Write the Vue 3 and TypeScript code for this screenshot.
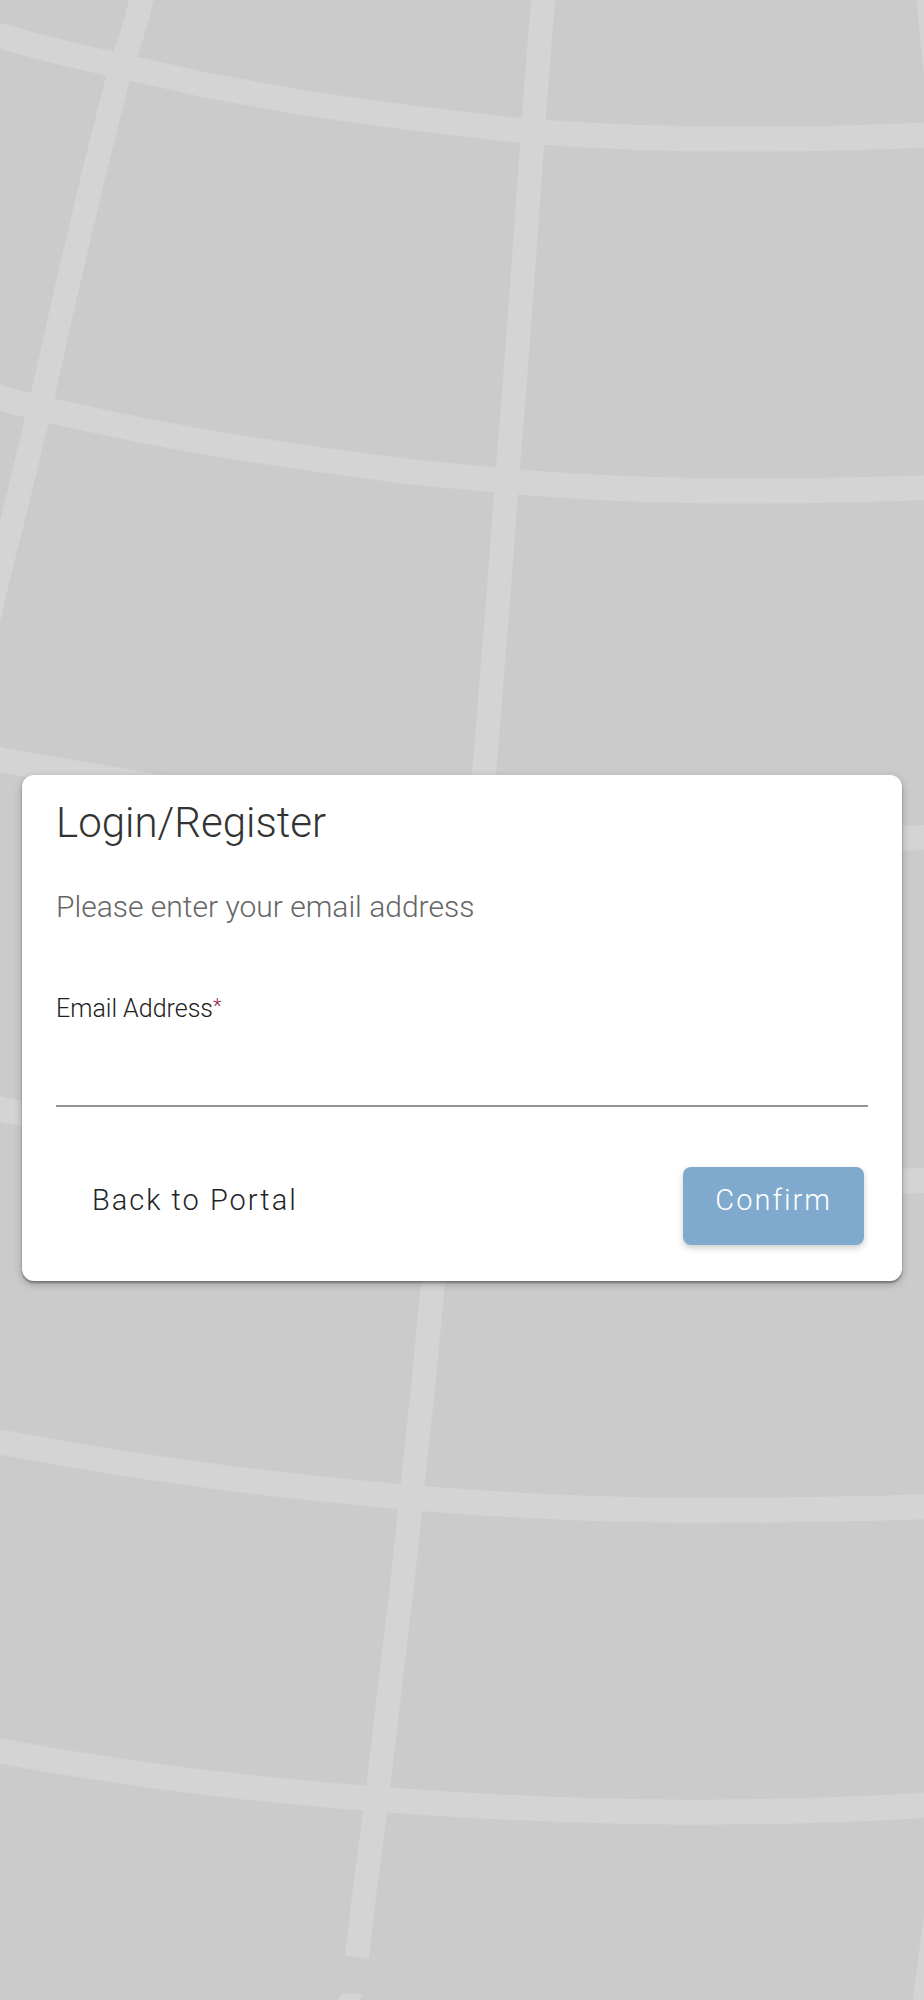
<script setup lang="ts">
import { ref } from 'vue'

const email = ref('')

const parallels: string[] = [
  'M-20 30 L0 36 Q60 53 121 66 L206 85 Q258 95 312 104 Q412 119 524 131 Q640 140 766 139 Q850 139 944 134',
  'M-20 393 L0 398 L35 407 Q147 433 236 447 Q324 461 412 472 L507 481 Q620 491 750 491 Q850 491 944 487',
  'M-20 755 L0 760 L88 775 L236 800 L412 824 Q620 842 796 841 L944 837',
  'M-20 1104 L0 1109 L147 1140 L412 1170 Q620 1186 796 1184 L944 1180',
  'M-20 1439 L0 1442 Q147 1470 295 1486 Q412 1499 501 1504 Q620 1511 720 1510 Q850 1510 944 1506',
  'M-20 1747 L0 1751 Q118 1773 236 1786 Q377 1801 501 1807 Q620 1813 720 1812 Q850 1811 944 1804',
]

const meridians: string[] = [
  'M146 -20 L141 0 Q135 30 121 66 L94 173 L65 296 L41 403 L18 498 L-5 590 L-18 650',
  'M544 -20 L543 0 L535 102 L526 230 L516 367 L507 480 L498 602 L484 774 L455 1040 L433 1284 L423 1387 L412 1491 L402 1586 L389 1694 L377 1798 L365 1888 L357 1957',
  'M928 -20 Q930 30 938 90',
  'M940 1880 Q932 1950 922 2020',
]
</script>

<template>
  <main class="page">
    <svg class="globe" viewBox="0 0 924 2000" preserveAspectRatio="xMidYMid slice" aria-hidden="true">
      <g class="parallels">
        <path v-for="d in parallels" :key="d" :d="d" />
      </g>
      <g class="meridians">
        <path v-for="d in meridians" :key="d" :d="d" />
      </g>
      <path class="tip" d="M343 1993 L363 1994 L359 2000 L338 2000 Z" />
    </svg>

    <form class="card" @submit.prevent>
      <h1>Login/Register</h1>
      <p class="hint">Please enter your email address</p>
      <label for="email">Email Address<span class="required">*</span></label>
      <input id="email" v-model="email" type="email" required />
      <div class="actions">
        <button type="button" class="back">Back to Portal</button>
        <button type="submit" class="confirm">Confirm</button>
      </div>
    </form>
  </main>
</template>

<style>
body {
  background: #cbcbcb;
}
</style>

<style scoped>
.page {
  position: relative;
  display: flex;
  align-items: center;
  justify-content: center;
  box-sizing: border-box;
  min-height: 100vh;
  padding: 56px 22px 0;
  overflow: hidden;
  font-family: Roboto, "Helvetica Neue", "Liberation Sans", sans-serif;
  font-weight: 300;
}

.globe {
  position: absolute;
  inset: 0;
  width: 100%;
  height: 100%;
  fill: none;
  stroke: #d4d4d4;
}

.parallels {
  stroke-width: 25px;
}

.meridians {
  stroke-width: 24px;
}

.tip {
  fill: #d4d4d4;
  stroke: none;
}

.card {
  position: relative;
  flex: 1;
  display: flex;
  flex-direction: column;
  box-sizing: border-box;
  padding: 22px 34px 36px;
  border-radius: 12px;
  background: #fff;
  box-shadow: 0 2px 2px rgba(0, 0, 0, 0.3), 0 3px 8px rgba(0, 0, 0, 0.24);
}

h1 {
  margin: 0;
  font-size: 42px;
  font-weight: 300;
  line-height: 52px;
  color: #333;
}

.hint {
  margin: 40px 0 0;
  font-size: 30px;
  line-height: 36px;
  color: #666;
}

label {
  margin-top: 68px;
  font-size: 25px;
  line-height: 32px;
  color: #212121;
}

.required {
  font-size: 20px;
  line-height: 20px;
  vertical-align: 4px;
  color: #9c1c4c;
}

input {
  box-sizing: border-box;
  width: 100%;
  height: 82px;
  padding: 24px 0 8px;
  border: 0;
  border-bottom: 2px solid #949494;
  border-radius: 0;
  background: transparent;
  font: inherit;
  font-size: 30px;
  color: #212121;
  outline: none;
}

.actions {
  display: flex;
  justify-content: space-between;
  margin-top: 60px;
  padding: 0 4px;
}

button {
  box-sizing: border-box;
  height: 78px;
  padding: 0 32px 12px;
  border: 0;
  border-radius: 8px;
  font: inherit;
  font-size: 29px;
  letter-spacing: 2px;
  cursor: pointer;
}

.back {
  background: transparent;
  color: #212429;
}

.confirm {
  background: #80aacd;
  color: #fff;
  box-shadow: 0 3px 6px rgba(0, 0, 0, 0.2);
}
</style>
